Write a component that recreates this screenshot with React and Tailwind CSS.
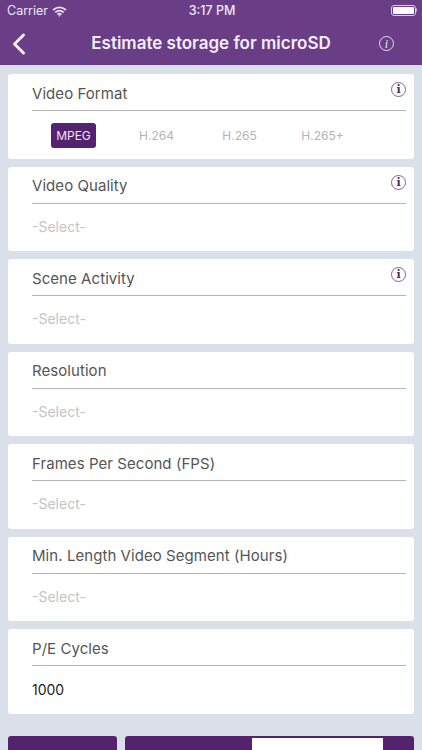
import React from 'react';
import { ChevronLeft } from 'lucide-react';

const FONT = "font-['Inter','Liberation_Sans',sans-serif]";

const formats = ['MPEG', 'H.264', 'H.265', 'H.265+'];

const sections = [
  { title: 'Video Quality', hasInfo: true, value: '-Select-' },
  { title: 'Scene Activity', hasInfo: true, value: '-Select-' },
  { title: 'Resolution', value: '-Select-' },
  { title: 'Frames Per Second (FPS)', value: '-Select-' },
  { title: 'Min. Length Video Segment (Hours)', value: '-Select-' },
  { title: 'P/E Cycles', value: '1000', filled: true },
];

const WifiIcon = () => (
  <svg width="15" height="11" viewBox="0 0 15 11" fill="none" stroke="#e9e2ef" strokeWidth="1.7">
    <path d="M1 4 Q7.5 -1.2 14 4" />
    <path d="M3.2 6.3 Q7.5 2.8 11.8 6.3" />
    <path d="M5.4 8.4 Q7.5 6.8 9.6 8.4" />
    <circle cx="7.5" cy="9.7" r="0.9" fill="#e9e2ef" stroke="none" />
  </svg>
);

const BatteryIcon = () => (
  <div className="-mt-[3px] flex items-center">
    <div className="flex h-[11px] w-[25px] rounded-[3px] border border-[#d8cde2] p-px">
      <div className="flex-1 rounded-[1px] bg-white" />
    </div>
    <div className="h-[4px] w-px rounded-r bg-[#b9a7c9]" />
  </div>
);

const InfoIcon = () => (
  <div className="flex h-[15px] w-[15px] items-center justify-center rounded-full border border-[#7f6592] font-['DejaVu_Serif',serif] text-[11px] leading-none font-bold text-[#4a2a63]">
    i
  </div>
);

const Card = ({ title, hasInfo, children }) => (
  <div className="relative h-[84.5px] rounded-[3px] bg-white pt-[5px] pr-2 pl-6">
    <div className="flex h-[30px] items-center text-[15px] tracking-[0.06px] text-[#555555]">{title}</div>
    <div className="mt-px h-px bg-[#b5b5b5]" />
    {hasInfo && (
      <div className="absolute top-[8px] right-[8px]">
        <InfoIcon />
      </div>
    )}
    {children}
  </div>
);

export default function App() {
  return (
    <div className={`flex h-[750px] w-[422px] flex-col overflow-hidden bg-[#d9e0ea] ${FONT}`}>
      <header className="h-[65px] shrink-0 bg-[#6a3d87] text-white">
        <div className="flex h-[22px] items-center justify-between pt-px pr-[5px] pl-[7px] text-[12.5px] text-[#eee8f3]">
          <div className="flex w-[130px] items-center gap-[4px]">
            <span>Carrier</span>
            <WifiIcon />
          </div>
          <span className="font-medium">3:17 PM</span>
          <div className="flex w-[130px] justify-end">
            <BatteryIcon />
          </div>
        </div>
        <div className="grid h-[43px] grid-cols-[1fr_auto_1fr] items-center px-[28px]">
          <ChevronLeft size={36} strokeWidth={2} className="-ml-[27px] text-[#f3eff6]" />
          <h1 className="text-[17px] font-semibold text-[#f3eff6]">Estimate storage for microSD</h1>
          <div className="flex h-[15px] w-[15px] items-center justify-center justify-self-end rounded-full border border-[#e5dcec] font-['Liberation_Serif',serif] text-[12px] leading-none text-[#f3eff6] italic">
            i
          </div>
        </div>
      </header>

      <main className="flex flex-col gap-[8px] px-2 pt-[9px]">
        <Card title="Video Format" hasInfo>
          <div className="mt-[12px] flex items-center text-[12px] text-[#b4b4b4]">
            {formats.map((format, index) => (
              <div key={format} className="flex w-[83px] justify-center">
                <span className={index === 0 ? 'flex h-[25px] w-[45px] items-center justify-center rounded-[3px] bg-[#54226f] text-[#eee6f3]' : ''}>
                  {format}
                </span>
              </div>
            ))}
          </div>
        </Card>

        {sections.map((section) => (
          <Card key={section.title} title={section.title} hasInfo={section.hasInfo}>
            <div className={`text-[14px] ${section.filled ? 'mt-[13px] text-[#222222]' : 'mt-[12px] text-[#c4c4c4]'}`}>
              {section.value}
            </div>
          </Card>
        ))}

        <div className="mt-[14.5px] flex gap-[8px]">
          <div className="h-[30px] w-[109px] rounded-t-[3px] bg-[#54226f]" />
          <div className="h-[30px] flex-1 rounded-t-[3px] bg-[#54226f] pt-[2px] pl-[127px]">
            <div className="h-full w-[131px] bg-white" />
          </div>
        </div>
      </main>
    </div>
  );
}
